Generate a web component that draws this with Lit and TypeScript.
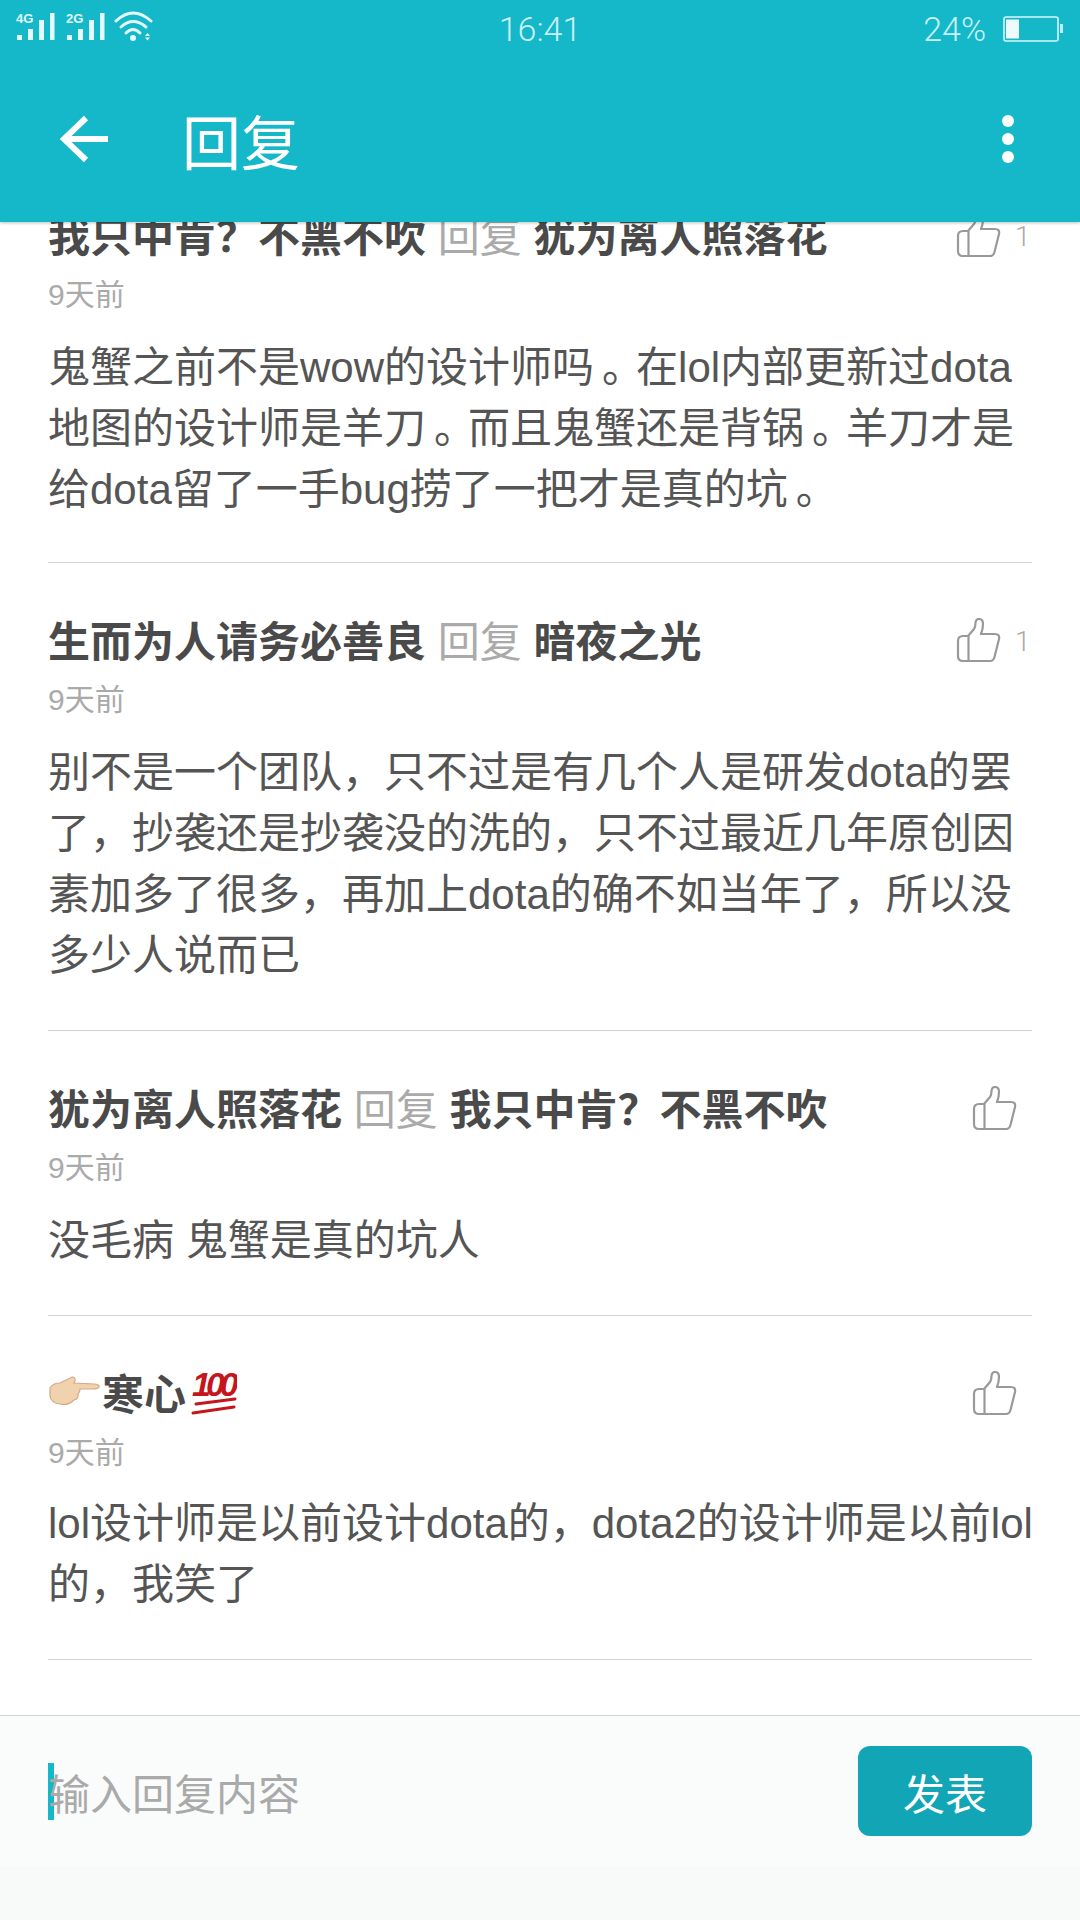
import { LitElement, html, css, svg } from "lit";
import { customElement, property } from "lit/decorators.js";

interface Reply {
  author: string;
  target?: string;
  lines: string[];
  likes?: number;
  emoji?: boolean;
}

const thumb = svg`<path d="M11 18 L17 11 Q18.500 9 18.500 5 Q19 1 22 1 Q26 1 26 6 Q26 11 24 16 L38 16 Q43 16 42 21 L37.500 39 Q36.500 43 33 43 L6 43 Q1 43 1 38 L1 23 Q1 18 6 18 Z M11.500 18 L11.500 43" fill="none" stroke="#999" stroke-width="2.200" stroke-linejoin="round"/>`;

@customElement("app-root")
export class AppRoot extends LitElement {
  static styles = css`
    :host {
      display: flex;
      flex-direction: column;
      width: 1080px;
      height: 1920px;
      overflow: hidden;
      background: #fff;
      font-family: "Liberation Sans", "Noto Sans CJK SC", sans-serif;
      color: #555;
    }

    .top {
      height: 222px;
      flex: none;
      background: #14b8c9;
      box-shadow: 0 1px 3px rgba(0, 0, 0, 0.25);
      position: relative;
      z-index: 2;
    }

    .status {
      height: 58px;
      display: flex;
      align-items: center;
      padding: 0 16px;
      color: #c9f1f5;
    }

    .status-side {
      flex: 1;
      display: flex;
      align-items: center;
    }

    .status-side.right {
      justify-content: flex-end;
      gap: 17px;
    }

    .clock,
    .percent {
      font-family: Roboto, "Liberation Sans", sans-serif;
      font-weight: 300;
      font-size: 34px;
    }

    .bar {
      height: 112px;
      margin-top: 25px;
      display: flex;
      align-items: center;
      padding: 0 0 0 60px;
      color: #fff;
    }

    .bar h1 {
      flex: 1;
      margin: 0 0 0 72px;
      font-size: 59px;
      font-weight: 400;
    }

    .dots {
      display: flex;
      flex-direction: column;
      gap: 6px;
      margin-right: 66px;
    }

    .dots span {
      width: 12px;
      height: 12px;
      border-radius: 50%;
      background: #fff;
    }

    .list {
      flex: 1;
      min-height: 0;
      overflow: hidden;
      padding: 0 48px 0 48px;
    }

    .rows {
      margin-top: -14px;
    }

    .row {
      padding: 0 0 44px;
      margin-bottom: 50px;
      border-bottom: 1px solid #d2d2d2;
    }

    .row:first-child {
      padding-bottom: 42px;
    }

    .row:last-child {
      margin-bottom: 0;
    }

    .head {
      display: flex;
      align-items: center;
      height: 50px;
    }

    .who {
      flex: 1;
      font-size: 42px;
      font-weight: 700;
      color: #4a4a4a;
      white-space: pre;
    }

    .who.with-emoji {
      display: flex;
      align-items: center;
    }

    .who .verb {
      font-weight: 400;
      color: #aaa;
    }

    .like {
      display: flex;
      align-items: center;
      width: 76px;
      padding-top: 6px;
      color: #aaa;
      font-family: Roboto, "Liberation Sans", sans-serif;
      font-weight: 300;
      font-size: 28px;
    }

    .like.empty {
      width: 60px;
      justify-content: flex-start;
    }

    .like svg {
      margin-right: 13px;
      flex: none;
    }

    .date {
      margin-top: 19px;
      font-size: 30px;
      line-height: 36px;
      color: #aaa;
    }

    .body {
      margin-top: 24px;
      font-size: 42px;
      line-height: 61px;
      white-space: pre;
    }

    .body.tight {
      margin-top: 22px;
    }

    /* half-width stop padded back to a full cell, sitting right of where the font puts it */
    .stop {
      font-feature-settings: "halt";
      padding: 0 13px 0 8px;
    }

    .foot {
      flex: none;
      height: 205px;
      box-sizing: border-box;
      border-top: 1px solid #d2d2d2;
      background: linear-gradient(#fafbfb 149px, #f8f9f9 149px);
      display: flex;
      align-items: flex-start;
      padding: 30px 48px 0;
    }

    .input {
      flex: 1;
      height: 90px;
      display: flex;
      align-items: center;
      font-size: 42px;
      color: #aaa;
    }

    .input i {
      width: 6px;
      height: 57px;
      margin-right: -6px;
      background: #14b8c9;
      flex: none;
    }

    .send {
      width: 174px;
      height: 90px;
      border-radius: 12px;
      background: #12a5b5;
      color: #fff;
      display: flex;
      align-items: center;
      justify-content: center;
      font-size: 42px;
    }

    .hundred {
      margin-left: 5px;
      flex: none;
    }
  `;

  @property({ type: Array })
  replies: Reply[] = [
    {
      author: "我只中肯？不黑不吹",
      target: "犹为离人照落花",
      likes: 1,
      lines: [
        "鬼蟹之前不是wow的设计师吗。在lol内部更新过dota",
        "地图的设计师是羊刀。而且鬼蟹还是背锅。羊刀才是",
        "给dota留了一手bug捞了一把才是真的坑。",
      ],
    },
    {
      author: "生而为人请务必善良",
      target: "暗夜之光",
      likes: 1,
      lines: [
        "别不是一个团队，只不过是有几个人是研发dota的罢",
        "了，抄袭还是抄袭没的洗的，只不过最近几年原创因",
        "素加多了很多，再加上dota的确不如当年了，所以没",
        "多少人说而已",
      ],
    },
    {
      author: "犹为离人照落花",
      target: "我只中肯？不黑不吹",
      lines: ["没毛病 鬼蟹是真的坑人"],
    },
    {
      author: "寒心",
      emoji: true,
      lines: ["lol设计师是以前设计dota的，dota2的设计师是以前lol", "的，我笑了"],
    },
  ];

  private signal(label: string) {
    return svg`
      <text x="0" y="12" font-size="13" font-weight="700" fill="#e4fafc" font-family="Liberation Sans">${label}</text>
      <rect x="1" y="24" width="5" height="5" fill="#e4fafc"/>
      <rect x="12" y="18" width="5" height="11" fill="#e4fafc"/>
      <rect x="23" y="9" width="5" height="20" fill="#e4fafc"/>
      <rect x="34" y="2" width="4.500" height="27" fill="#e4fafc"/>`;
  }

  private renderStatusIcons() {
    return html`<svg width="140" height="36" viewBox="0 0 140 36">
      ${this.signal("4G")}
      <g transform="translate(50 0)">${this.signal("2G")}</g>
      <g fill="none" stroke="#e4fafc" stroke-width="3" stroke-linecap="round">
        <path d="M100 10 Q117 -6 135 10"/>
        <path d="M105 16 Q117 5 130 16"/>
        <path d="M110 22 Q117 15 124 22"/>
      </g>
      <circle cx="117" cy="27" r="3" fill="#e4fafc"/>
      <path d="M129 25 L131.500 22 L134 25 Z M129 26.500 L134 26.500 L131.500 29.500 Z" fill="#e4fafc"/>
    </svg>`;
  }

  private renderBattery() {
    return html`<svg width="61" height="26" viewBox="0 0 61 26">
      <rect x="1" y="1" width="54" height="24" rx="2" fill="none" stroke="#d8f6f9" stroke-width="1.600"/>
      <rect x="3" y="3.500" width="13" height="19" fill="#eefbfc"/>
      <rect x="57" y="8" width="3" height="9" fill="#bdeef3"/>
    </svg>`;
  }

  private renderEmojiName(name: string) {
    return html`<svg width="54" height="34" viewBox="0 0 54 34">
        <path d="M2 14 Q5 9 12 9 L24 3 Q28 3 27 7 L26 9 L47 10 Q52 11 51 13 Q50 15 45 15 L32 15 Q32 18 30 20 Q31 25 26 26 Q20 32 12 30 Q3 29 2 22 Z" fill="#f0d2ae" stroke="#d4a985" stroke-width="1.200"/>
      </svg>${name}<svg class="hundred" width="46" height="50" viewBox="0 0 46 50">
        <text x="1" y="30" font-size="34" font-style="italic" letter-spacing="-5" fill="#c4161c" font-family="Liberation Sans">100</text>
        <path d="M5 38 L44 33 M2 47 L43 41" stroke="#c4161c" stroke-width="3" stroke-linecap="round"/>
      </svg>`;
  }

  private renderLine(line: string) {
    return html`<div>${line.split("。").map((part, i) => (i === 0 ? part : html`<span class="stop">。</span>${part}`))}</div>`;
  }

  private renderRow(r: Reply) {
    return html`
      <div class="row">
        <div class="head">
          ${r.emoji
            ? html`<div class="who with-emoji">${this.renderEmojiName(r.author)}</div>`
            : html`<div class="who">${r.author} <span class="verb">回复</span> ${r.target}</div>`}
          <div class="like ${r.likes ? "" : "empty"}">
            <svg width="46" height="46" viewBox="-1 0 46 46">${thumb}</svg>${r.likes ?? ""}
          </div>
        </div>
        <div class="date">9天前</div>
        <div class="body ${r.emoji ? "tight" : ""}">${r.lines.map((l) => this.renderLine(l))}</div>
      </div>
    `;
  }

  render() {
    return html`
      <div class="top">
        <div class="status">
          <div class="status-side">${this.renderStatusIcons()}</div>
          <div class="clock">16:41</div>
          <div class="status-side right">
            <span class="percent">24%</span>${this.renderBattery()}
          </div>
        </div>
        <div class="bar">
          <svg width="50" height="50" viewBox="0 0 50 50">
            <path d="M48 25 L4 25 M26 4 L4 25 L26 46" fill="none" stroke="#fff" stroke-width="6"/>
          </svg>
          <h1>回复</h1>
          <div class="dots"><span></span><span></span><span></span></div>
        </div>
      </div>
      <div class="list">
        <div class="rows">${this.replies.map((r) => this.renderRow(r))}</div>
      </div>
      <div class="foot">
        <div class="input"><i></i>输入回复内容</div>
        <div class="send">发表</div>
      </div>
    `;
  }
}
